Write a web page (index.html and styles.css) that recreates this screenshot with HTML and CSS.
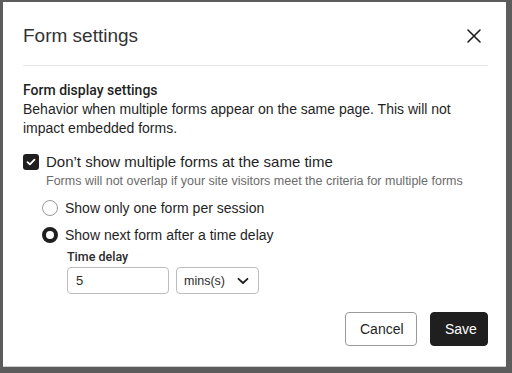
FILE: index.html
```html
<!DOCTYPE html>
<html lang="en">
<head>
    <meta charset="utf-8">
    <title>Form settings</title>
    <link rel="stylesheet" href="styles.css">
</head>
<body>
    <div class="dialog">
        <div class="dialogHeader">
            <h1>Form settings</h1>
            <button class="closeBtn" aria-label="Close">
                <svg width="14" height="14" viewBox="0 0 14 14"><path d="M1 1L13 13M13 1L1 13" stroke="#1f1f1f" stroke-width="1.6" stroke-linecap="round"/></svg>
            </button>
        </div>
        <div class="dialogBody">
            <h2>Form display settings</h2>
            <p class="intro">Behavior when multiple forms appear on the same page. This will not impact embedded forms.</p>

            <div class="checkRow">
                <span class="checkbox">
                    <svg width="10" height="8" viewBox="0 0 10 8"><path d="M1.5 4.2L3.9 6.4L8.5 1.6" fill="none" stroke="#fff" stroke-width="1.8" stroke-linecap="round" stroke-linejoin="round"/></svg>
                </span>
                <div>
                    <div class="checkLabel">Don’t show multiple forms at the same time</div>
                    <div class="hint">Forms will not overlap if your site visitors meet the criteria for multiple forms</div>
                </div>
            </div>

            <div class="radioGroup">
                <div class="radioRow">
                    <span class="radio"></span>
                    <span>Show only one form per session</span>
                </div>
                <div class="radioRow">
                    <span class="radio checked"></span>
                    <span>Show next form after a time delay</span>
                </div>
                <div class="delay">
                    <div class="delayLabel">Time delay</div>
                    <div class="delayFields">
                        <div class="textField">5</div>
                        <div class="selectField">
                            <span>mins(s)</span>
                            <svg width="12" height="8" viewBox="0 0 12 8"><path d="M1.5 1.8L6 6L10.5 1.8" fill="none" stroke="#1f1f1f" stroke-width="1.8" stroke-linecap="round" stroke-linejoin="round"/></svg>
                        </div>
                    </div>
                </div>
            </div>
        </div>
        <div class="dialogFooter">
            <button class="btn cancel">Cancel</button>
            <button class="btn save">Save</button>
        </div>
    </div>
</body>
</html>
```

FILE: styles.css
```css
html, body {
    margin: 0;
    height: 100%;
}
body {
    background-color: #5c5c5c;
    font-family: "Liberation Sans", Arial, sans-serif;
    color: #1f1f1f;
    box-sizing: border-box;
    padding: 2px 6px 6px 3px;
}
.dialog {
    background-color: #fff;
    height: 365px;
    box-sizing: border-box;
    border-bottom: 1px solid #cfcfcf;
    display: flex;
    flex-direction: column;
}
.dialogHeader {
    display: flex;
    justify-content: space-between;
    align-items: center;
    margin: 0 18px 0 20px;
    padding: 22px 0 17px;
    border-bottom: 1px solid #e6e6e6;
}
h1 {
    margin: 0;
    font-size: 19px;
    line-height: 24px;
    font-weight: 400;
    color: #333;
}
.closeBtn {
    border: none;
    background: none;
    padding: 0;
    margin-right: 7px;
    width: 14px;
    height: 14px;
    display: flex;
}
.dialogBody {
    padding: 14px 20px 0;
    font-size: 14px;
}
h2 {
    margin: 0;
    font-family: Roboto, "Liberation Sans", sans-serif;
    font-size: 14px;
    line-height: 20px;
    font-weight: 500;
}
.intro {
    margin: 0;
    line-height: 19px;
}
.checkRow {
    display: flex;
    gap: 7px;
    margin-top: 15px;
}
.checkbox {
    flex: none;
    width: 16px;
    height: 16px;
    border-radius: 3px;
    background-color: #1f1f1f;
    display: flex;
    align-items: center;
    justify-content: center;
    margin-top: 1px;
}
.checkLabel {
    font-size: 15px;
    line-height: 18px;
}
.hint {
    font-size: 12.5px;
    line-height: 16px;
    color: #6b6b6b;
    margin-top: 2px;
}
.radioGroup {
    padding-left: 19px;
    margin-top: 5px;
}
.radioRow {
    display: flex;
    align-items: center;
    gap: 7px;
    height: 27px;
}
.radio {
    width: 16px;
    height: 16px;
    box-sizing: border-box;
    border-radius: 50%;
    border: 1.5px solid #9a9a9a;
}
.radio.checked {
    border: 4.5px solid #1f1f1f;
}
.delay {
    padding-left: 25px;
    margin-top: 1px;
}
.delayLabel {
    font-family: Roboto, "Liberation Sans", sans-serif;
    font-size: 12.5px;
    font-weight: 500;
    line-height: 16px;
    color: #2b2b2b;
}
.delayFields {
    display: flex;
    gap: 7px;
    margin-top: 2px;
}
.textField, .selectField {
    height: 27px;
    box-sizing: border-box;
    border: 1px solid #bdbdbd;
    border-radius: 4px;
    display: flex;
    align-items: center;
    font-size: 13px;
    color: #2b2b2b;
}
.textField {
    width: 102px;
    padding-left: 8px;
}
.selectField {
    width: 83px;
    padding: 0 9px 0 7px;
    justify-content: space-between;
    font-size: 12.5px;
}
.dialogFooter {
    margin-top: auto;
    display: flex;
    justify-content: flex-end;
    gap: 13px;
    padding: 0 18px 20px;
}
.btn {
    height: 34px;
    border-radius: 4px;
    font-family: inherit;
    font-size: 14px;
    padding: 0 14px;
}
.cancel {
    background-color: #fff;
    border: 1px solid #9a9a9a;
    color: #1f1f1f;
    width: 72px;
}
.save {
    background-color: #1f1f1f;
    border: 1px solid #1f1f1f;
    color: #fff;
    width: 58px;
}
```
